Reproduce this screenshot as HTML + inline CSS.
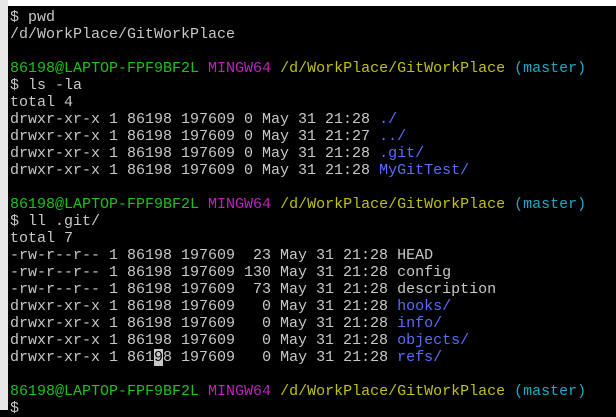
<!DOCTYPE html>
<html><head><style>
html,body{margin:0;padding:0;width:616px;height:410px;overflow:hidden;background:#000;}
.top{position:absolute;left:0;top:0;width:616px;height:6px;background:#fff;}
.left{position:absolute;left:0;top:0;width:8px;height:410px;background:#e8e8e8;}
pre{position:absolute;left:10px;top:9px;margin:0;font-family:"Liberation Mono",monospace;font-size:15px;line-height:17px;color:#c8c8c8;}
.g{color:#1cc11c}.m{color:#c020c0}.y{color:#c0c010}.c{color:#20a8c8}.b{color:#5a6cff}
.cur{background:#c8c8c8;color:#000}
</style></head><body>
<div class="top"></div><div class="left"></div>
<pre>$ pwd
/d/WorkPlace/GitWorkPlace

<span class="g">86198@LAPTOP-FPF9BF2L</span> <span class="m">MINGW64</span> <span class="y">/d/WorkPlace/GitWorkPlace</span> <span class="c">(master)</span>
$ ls -la
total 4
drwxr-xr-x 1 86198 197609 0 May 31 21:28 <span class="b">./</span>
drwxr-xr-x 1 86198 197609 0 May 31 21:27 <span class="b">../</span>
drwxr-xr-x 1 86198 197609 0 May 31 21:28 <span class="b">.git/</span>
drwxr-xr-x 1 86198 197609 0 May 31 21:28 <span class="b">MyGitTest/</span>

<span class="g">86198@LAPTOP-FPF9BF2L</span> <span class="m">MINGW64</span> <span class="y">/d/WorkPlace/GitWorkPlace</span> <span class="c">(master)</span>
$ ll .git/
total 7
-rw-r--r-- 1 86198 197609  23 May 31 21:28 HEAD
-rw-r--r-- 1 86198 197609 130 May 31 21:28 config
-rw-r--r-- 1 86198 197609  73 May 31 21:28 description
drwxr-xr-x 1 86198 197609   0 May 31 21:28 <span class="b">hooks/</span>
drwxr-xr-x 1 86198 197609   0 May 31 21:28 <span class="b">info/</span>
drwxr-xr-x 1 86198 197609   0 May 31 21:28 <span class="b">objects/</span>
drwxr-xr-x 1 861<span class="cur">9</span>8 197609   0 May 31 21:28 <span class="b">refs/</span>

<span class="g">86198@LAPTOP-FPF9BF2L</span> <span class="m">MINGW64</span> <span class="y">/d/WorkPlace/GitWorkPlace</span> <span class="c">(master)</span>
$ </pre>
</body></html>
